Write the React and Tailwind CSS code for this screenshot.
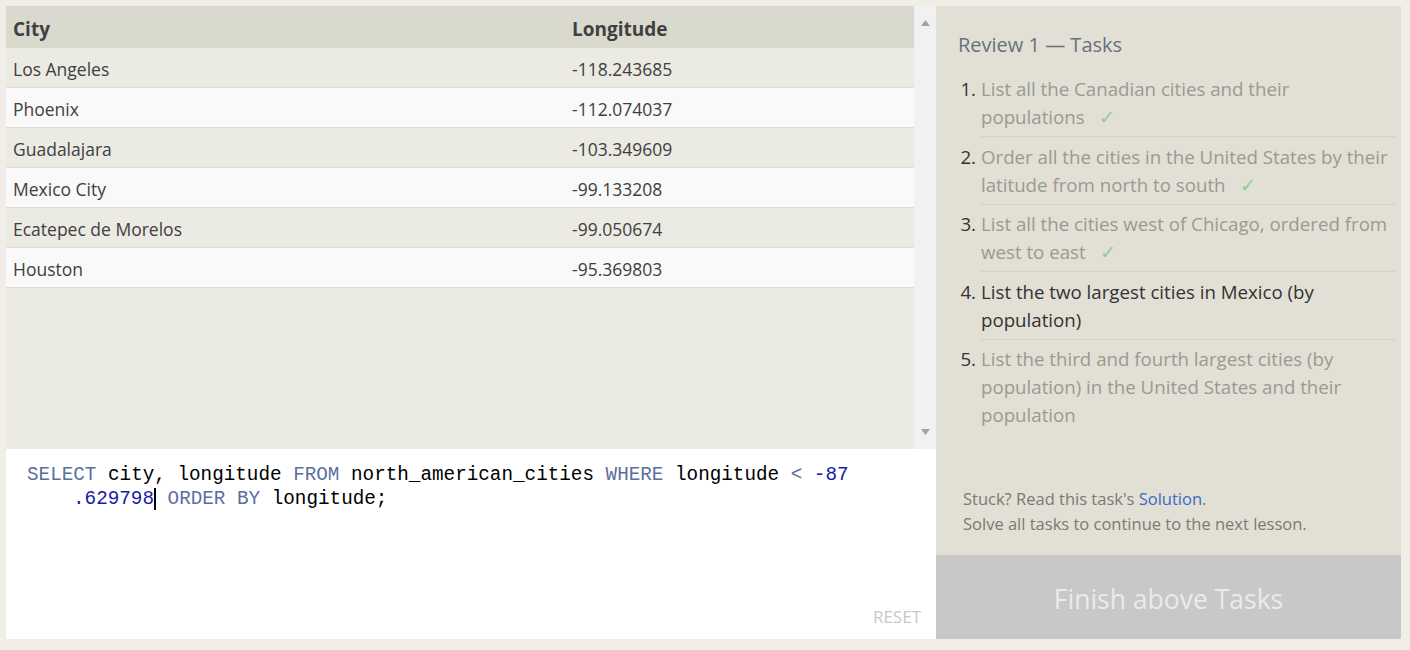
import React from "react";

const rows = [
  ["Los Angeles", "-118.243685"],
  ["Phoenix", "-112.074037"],
  ["Guadalajara", "-103.349609"],
  ["Mexico City", "-99.133208"],
  ["Ecatepec de Morelos", "-99.050674"],
  ["Houston", "-95.369803"],
];

const tasks = [
  { lines: ["List all the Canadian cities and their", "populations"], done: true },
  { lines: ["Order all the cities in the United States by their", "latitude from north to south"], done: true },
  { lines: ["List all the cities west of Chicago, ordered from", "west to east"], done: true },
  { lines: ["List the two largest cities in Mexico (by", "population)"], current: true },
  { lines: ["List the third and fourth largest cities (by", "population) in the United States and their", "population"] },
];

const ui = { fontFamily: '"Open Sans", "Noto Sans", sans-serif' };
const mono = { fontFamily: '"Liberation Mono", "DejaVu Sans Mono", monospace' };

export default function App() {
  return (
    <div className="w-[1410px] h-[650px] bg-[#f0eee6] pt-[6px] pl-[6px] flex" style={ui}>
      <div className="w-[930px] h-[633px] flex flex-col">
        <div className="h-[443px] flex">
          <div className="w-[908px] h-full bg-[#ebeae3]">
            <div className="h-[42px] bg-[#dad9cd] flex items-center pt-[5px] text-[19px] font-bold text-[#404040]">
              <div className="w-[560px] pl-[7px]">City</div>
              <div className="pl-[6px]">Longitude</div>
            </div>
            {rows.map((r, i) => (
              <div
                key={i}
                className={`h-[40px] flex items-center pt-[4px] text-[17.5px] text-[#404040] border-b border-[#dcdbd4] ${i % 2 === 0 ? "bg-[#ebeae3]" : "bg-[#f9f9f9]"}`}
              >
                <div className="w-[560px] pl-[7px]">{r[0]}</div>
                <div className="pl-[6px]">{r[1]}</div>
              </div>
            ))}
          </div>
          <div className="w-[22px] h-full bg-[#f1f1f1] flex flex-col items-center justify-between py-[14px]">
            <svg width="9" height="6" viewBox="0 0 9 6"><path d="M4.5 0 L9 6 L0 6 Z" fill="#a3a3a3" /></svg>
            <svg width="9" height="6" viewBox="0 0 9 6"><path d="M0 0 L9 0 L4.5 6 Z" fill="#a3a3a3" /></svg>
          </div>
        </div>
        <div className="flex-1 bg-white relative pl-[21px] pt-[14px] text-[19.3px] leading-[24px]" style={mono}>
          <div className="whitespace-pre text-black">
            <span className="text-[#5a6fa0]">SELECT</span> city, longitude <span className="text-[#5a6fa0]">FROM</span> north_american_cities <span className="text-[#5a6fa0]">WHERE</span> longitude <span className="text-[#5a6fa0]">&lt;</span> <span className="text-[#1a1aa6]">-87</span>
          </div>
          <div className="whitespace-pre text-black pl-[46px]">
            <span className="text-[#1a1aa6] border-r-2 border-black">.629798</span> <span className="text-[#5a6fa0]">ORDER BY</span> longitude;
          </div>
          <div className="absolute right-[15px] bottom-[10px] text-[17px] text-[#c8c8c8]" style={ui}>RESET</div>
        </div>
      </div>
      <div className="w-[465px] h-[633px] bg-[#e2dfd5] flex flex-col">
        <div className="flex-1 pl-[22px] pr-[6px] pt-[26px]">
          <div className="text-[20px] text-[#68707c] leading-[26px] mb-[17px]">Review 1 — Tasks</div>
          <div>
            {tasks.map((t, i) => (
              <div key={i} className="flex text-[18.7px] leading-[28px]">
                <div className="w-[23px] text-right pr-[5px] text-[#333]">{i + 1}.</div>
                <div
                  className={`flex-1 pb-[5px] pt-[6px] -mt-[6px] mb-[5.5px] ${i < tasks.length - 1 ? "border-b border-[#d3d0c6]" : ""} ${t.current ? "text-[#333]" : "text-[#9a9a92]"}`}
                >
                  {t.lines.map((l, j) => (
                    <div key={j} className="whitespace-nowrap">
                      {l}
                      {t.done && j === t.lines.length - 1 && <span className="text-[#8fd08f] ml-[14px]">✓</span>}
                    </div>
                  ))}
                </div>
              </div>
            ))}
          </div>
        </div>
        <div className="pl-[27px] pb-[19px] text-[16.5px] leading-[25px] text-[#7a7a74]">
          <div>Stuck? Read this task's <span className="text-[#3b6cc4]">Solution</span>.</div>
          <div>Solve all tasks to continue to the next lesson.</div>
        </div>
        <div className="h-[84px] bg-[#c8c8c8] flex items-center justify-center pt-[6px] text-[26.5px] text-[#ebebeb]">
          Finish above Tasks
        </div>
      </div>
    </div>
  );
}
